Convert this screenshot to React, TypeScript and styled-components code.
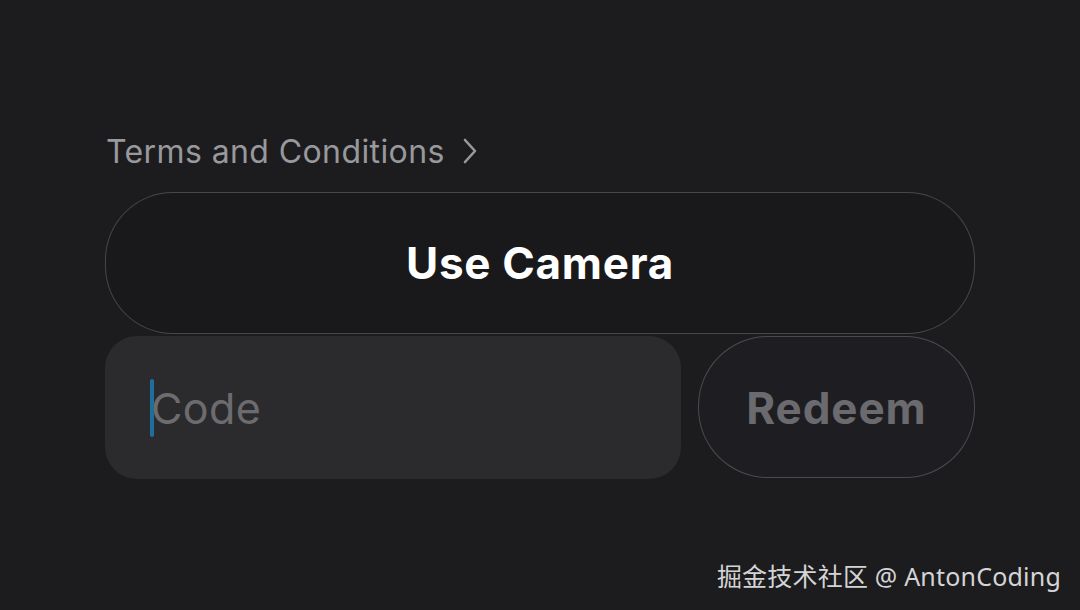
import React from "react";
import styled, { createGlobalStyle } from "styled-components";

const GlobalStyle = createGlobalStyle`
  html, body {
    margin: 0;
    padding: 0;
    background: #1c1c1e;
  }
  body {
    font-family: Inter, "Noto Sans", sans-serif;
    -webkit-font-smoothing: antialiased;
  }
`;

const Page = styled.div`
  width: 1080px;
  height: 610px;
  background: #1c1c1e;
  position: relative;
  overflow: hidden;
  display: flex;
  flex-direction: column;
  padding: 128px 105px 0 105px;
  box-sizing: border-box;
`;

const TermsLink = styled.a`
  display: flex;
  align-items: center;
  gap: 17px;
  color: #98989d;
  font-size: 32px;
  font-weight: 400;
  letter-spacing: 0.4px;
  height: 46px;
  margin-left: 1px;
  margin-bottom: 18px;
  cursor: pointer;
`;

const CameraButton = styled.button`
  height: 142px;
  width: 870px;
  border-radius: 68px;
  background: #19191b;
  border: 1.5px solid rgba(255, 255, 255, 0.2);
  color: #ffffff;
  font-family: Inter, "Noto Sans", sans-serif;
  font-size: 44px;
  font-weight: 700;
  letter-spacing: 0.7px;
  box-sizing: border-box;
  cursor: pointer;
`;

const Row = styled.div`
  display: flex;
  gap: 17px;
  margin-top: 2px;
  width: 870px;
`;

const CodeField = styled.div`
  position: relative;
  flex: 0 0 576px;
  height: 143px;
  border-radius: 32px;
  background: #2b2b2e;
  display: flex;
  align-items: center;
  padding-left: 45px;
  box-sizing: border-box;
`;

const Caret = styled.span`
  width: 4px;
  height: 58px;
  background: #1f6e9c;
  border-radius: 2px;
  margin-right: -3px;
`;

const Placeholder = styled.span`
  color: #6c6c70;
  font-size: 43px;
  font-weight: 400;
  letter-spacing: 0.4px;
`;

const RedeemButton = styled.button`
  flex: 1;
  height: 142px;
  border-radius: 70px;
  background: #1e1e22;
  border: 1.5px solid rgba(255, 255, 255, 0.2);
  color: #6a6a6f;
  font-family: Inter, "Noto Sans", sans-serif;
  font-size: 44px;
  font-weight: 700;
  letter-spacing: 0.9px;
  box-sizing: border-box;
  padding-top: 2px;
`;

const Watermark = styled.div`
  position: absolute;
  right: 19px;
  bottom: 17px;
  color: #d4d4d6;
  font-size: 25px;
  font-family: "Noto Sans", "Noto Sans CJK SC", sans-serif;
  letter-spacing: 0.2px;
`;

const Chevron = () => (
  <svg width="16" height="26" viewBox="0 0 16 26" fill="none">
    <path
      d="M3 2 L13 13 L3 24"
      stroke="#98989d"
      strokeWidth="2.6"
      strokeLinecap="round"
      strokeLinejoin="round"
    />
  </svg>
);

export default function App() {
  return (
    <Page>
      <GlobalStyle />
      <TermsLink>
        Terms and Conditions
        <Chevron />
      </TermsLink>
      <CameraButton>Use Camera</CameraButton>
      <Row>
        <CodeField>
          <Caret />
          <Placeholder>Code</Placeholder>
        </CodeField>
        <RedeemButton>Redeem</RedeemButton>
      </Row>
      <Watermark>掘金技术社区 @ AntonCoding</Watermark>
    </Page>
  );
}
